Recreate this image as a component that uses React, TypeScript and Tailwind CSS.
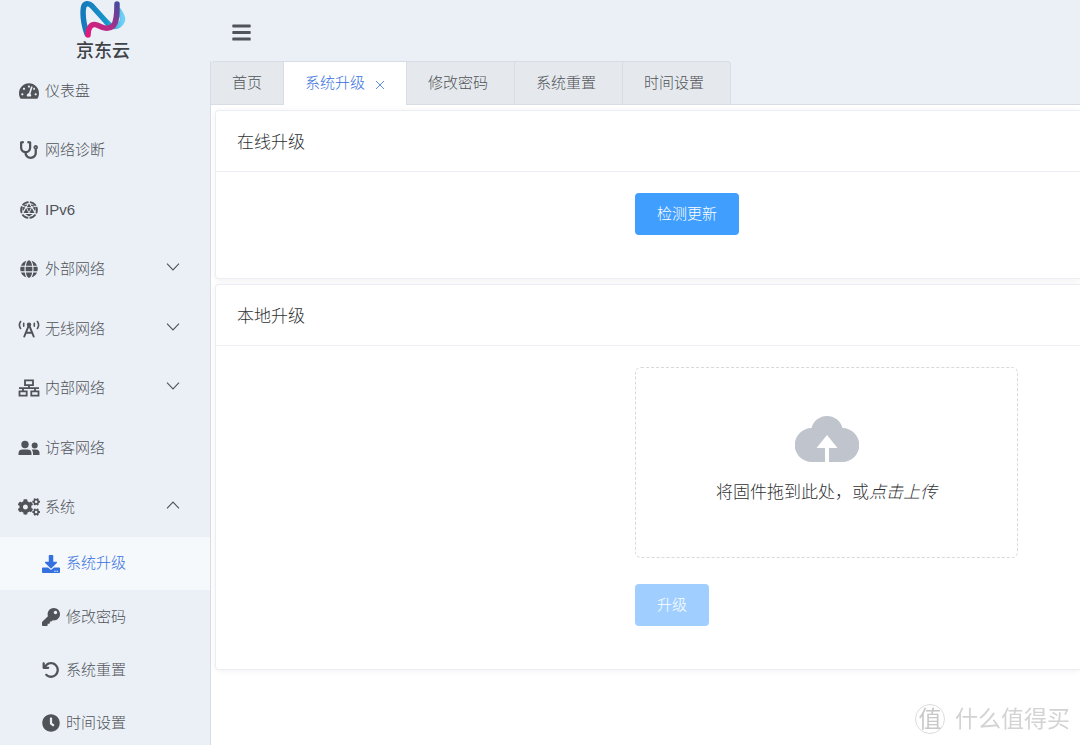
import { useState } from 'react';
import type { ReactNode } from 'react';
import { FaBars, FaClock, FaCogs, FaDownload, FaGlobe, FaKey, FaStethoscope, FaTachometerAlt } from 'react-icons/fa';
import { FaArrowRotateLeft } from 'react-icons/fa6';

type Item = { label: string; icon: ReactNode; expandable?: boolean };

function Polyhedron() {
  return (
    <svg viewBox="0 0 24 24" fill="none" stroke="currentColor" className="size-[18px]" aria-hidden="true">
      <circle cx="12" cy="12" r="10.6" strokeWidth="2.400" strokeDasharray="9.3 1.800" strokeDashoffset="4.6" />
      <path d="M12 3.200 9 8.200h6zM8.200 9.300 4.700 16h6.800zM15.800 9.300 12.500 16h6.800zM9.500 9.300h5L12 14.800zM3 7.500 7 8.800 3.600 14zM21 7.500 17 8.800l3.400 5.200zM7 17.400h10L12 20.600z" fill="currentColor" stroke="none" />
      <path d="M5.600 6.900 9 5.100M18.400 6.900 15 5.100" strokeWidth="2" />
    </svg>
  );
}

function Antenna() {
  return (
    <svg viewBox="0 0 22 18" fill="none" stroke="currentColor" strokeLinecap="round" strokeLinejoin="round" className="h-[18px] w-[22px]" aria-hidden="true">
      <path d="M2.600 1.500Q.2 5 2.600 8.500M19.400 1.500Q21.800 5 19.400 8.500M5.700 3.300V6.300M16.300 3.300V6.300" strokeWidth="1.6" />
      <path d="M6.300 16.500 11 4.800l4.700 11.700M8 12.700h6" strokeWidth="2" />
      <circle cx="11" cy="4.600" r="2.200" fill="currentColor" stroke="none" />
    </svg>
  );
}

function Topology() {
  return (
    <svg viewBox="0 0 22 18" fill="none" stroke="currentColor" strokeWidth="1.800" className="h-[18px] w-[22px]" aria-hidden="true">
      <path d="M7 1.400h8v4.700H7zM1.500 12.400h7.200v4.200H1.500zM13.300 12.400h7.200v4.200h-7.200zM11 6v3.200M5 12V9.200h12V12M1 9.200h20" />
    </svg>
  );
}

function People() {
  return (
    <svg viewBox="0 0 22 18" fill="currentColor" className="h-[18px] w-[22px]" aria-hidden="true">
      <circle cx="7" cy="5.500" r="3.700" />
      <circle cx="16.700" cy="6.500" r="3" />
      <path d="M.5 16v-1.500a4 4 0 0 1 4-4h5a4 4 0 0 1 4 4V16zM15 16v-2a6 6 0 0 0-1.300-3.500h4.300a3.500 3.500 0 0 1 3.500 3.500v2z" />
    </svg>
  );
}

const items: Item[] = [
  { label: '仪表盘', icon: <FaTachometerAlt className="h-[18px] w-5" /> },
  { label: '网络诊断', icon: <FaStethoscope className="size-[18px]" /> },
  { label: 'IPv6', icon: <Polyhedron /> },
  { label: '外部网络', icon: <FaGlobe className="size-[18px]" />, expandable: true },
  { label: '无线网络', icon: <Antenna />, expandable: true },
  { label: '内部网络', icon: <Topology />, expandable: true },
  { label: '访客网络', icon: <People /> },
];

const subItems: Item[] = [
  { label: '系统升级', icon: <FaDownload className="size-[18px]" /> },
  { label: '修改密码', icon: <FaKey className="size-[18px]" /> },
  { label: '系统重置', icon: <FaArrowRotateLeft className="size-[18px]" /> },
  { label: '时间设置', icon: <FaClock className="size-[18px]" /> },
];

const tabs = ['首页', '系统升级', '修改密码', '系统重置', '时间设置'];

function tabClass(tab: string, active: boolean) {
  if (active) return '-mb-px flex items-center border-l border-[#d8dce5] bg-white px-[21px] text-[#3570e0]';
  if (tab === '首页') return 'flex items-center px-[21px]';
  return 'flex items-center border-l border-[#d8dce5] pr-[26px] pl-[21px]';
}

function Logo() {
  return (
    <a href="#home" className="flex h-[61px] w-[206px] flex-col items-center text-[#3f4347]">
      <svg viewBox="0 0 48 40" className="h-10 w-12 shrink-0" fill="none" strokeLinecap="round" strokeLinejoin="round" aria-hidden="true">
        <defs>
          <linearGradient id="logoBlue" x1="0" y1="0" x2="1" y2="0">
            <stop offset="0" stopColor="#1679ba" />
            <stop offset="0.6" stopColor="#1796cb" />
            <stop offset="1" stopColor="#6fd0f5" />
          </linearGradient>
          <linearGradient id="logoPink" x1="0" y1="1" x2="1" y2="0">
            <stop offset="0" stopColor="#e5197d" />
            <stop offset="0.5" stopColor="#b02c86" />
            <stop offset="1" stopColor="#4a4a9c" />
          </linearGradient>
        </defs>
        <path d="M8 34C5 25 3.500 14 4.500 7.500C5.500 3 9.500 2.500 13 6L27 21.500C32 28 38 28 42 23C45 19 43 16 40 11" stroke="url(#logoBlue)" strokeWidth="5.5" />
        <path d="M9 35C9 28 12 23 18 25C24 28 29 30 34 26C38 22 38 14 38 4" stroke="url(#logoPink)" strokeWidth="5.5" />
      </svg>
      <span className="text-[18px] leading-[22px] font-medium">京东云</span>
    </a>
  );
}

function Chevron({ open }: { open?: boolean }) {
  return (
    <svg viewBox="0 0 14 12" className="mr-[30px] mb-1 ml-auto h-3 w-3.5" fill="none" stroke="currentColor" strokeWidth="1.1" aria-hidden="true">
      <path d={open ? 'M1 9.300 7 3l6 6.300' : 'M1 2.700 7 9l6-6.300'} />
    </svg>
  );
}

function Card({ title, children }: { title: string; children: ReactNode }) {
  return (
    <section className="rounded-l border border-r-0 border-[#ebeef5] bg-white shadow-[0_1px_6px_rgba(0,0,0,0.06)]">
      <h2 className="border-b border-[#ebeef5] px-[21px] pt-5 pb-[17px] text-[17px] leading-[23px] text-[#303133]">{title}</h2>
      <div className="pt-[21px] pb-[43px] pl-[419px]">{children}</div>
    </section>
  );
}

export default function App() {
  const [active, setActive] = useState('系统升级');
  return (
    <div className="flex min-h-screen overflow-hidden bg-[#ebf0f7] font-['Liberation_Sans','Noto_Sans_CJK_SC',sans-serif] text-[15px] font-light text-[#505357]">
      <aside className="w-[210px] shrink-0">
        <Logo />
        <nav aria-label="主菜单">
          <div className="grid h-[476px] auto-rows-fr">
            {items.map(({ label, icon, expandable }) => (
              <a key={label} href="#menu" className="flex items-center pl-[18px]">
                <span className="flex w-[22px] justify-center">{icon}</span>
                <span className="ml-[5px]">{label}</span>
                {expandable && <Chevron />}
              </a>
            ))}
            <button type="button" aria-expanded="true" className="flex items-center pl-[18px]">
              <span className="flex w-[22px] justify-center"><FaCogs className="h-[18px] w-[22px]" /></span>
              <span className="ml-[5px]">系统</span>
              <Chevron open />
            </button>
          </div>
          {subItems.map(({ label, icon }) => (
            <a
              key={label}
              href="#menu"
              className={label === '系统升级' ? 'flex h-[53px] items-center bg-[#f5f9fc] pl-[42px] text-[#3570e0]' : 'flex h-[53px] items-center pt-px pl-[42px]'}
            >
              {icon}
              <span className="ml-[6px]">{label}</span>
            </a>
          ))}
        </nav>
      </aside>

      <div className="flex min-w-0 flex-1 flex-col">
        <header className="flex h-[61px] items-center pt-[3px] pl-[21px]">
          <button type="button" aria-label="折叠菜单"><FaBars className="size-[21px]" /></button>
        </header>
        <main className="flex-1 border-l border-[#d8dce5] bg-white">
          <div className="flex border-b border-[#d8dce5] bg-[#ebf0f7]">
            <div role="tablist" className="-mb-px flex h-[44px] rounded-t border border-l-0 border-[#d8dce5] bg-[#e5e9ed]">
              {tabs.map((tab) => (
                <button
                  key={tab}
                  type="button"
                  role="tab"
                  aria-selected={tab === active}
                  onClick={() => setActive(tab)}
                  className={tabClass(tab, tab === active)}
                >
                  {tab}
                  {tab === active && (
                    <svg viewBox="0 0 10 10" className="mt-0.5 ml-[10px] size-[10px]" stroke="currentColor" strokeWidth="0.8" aria-hidden="true">
                      <path d="m1 1 8 8M9 1 1 9" />
                    </svg>
                  )}
                </button>
              ))}
            </div>
          </div>
          <div className="flex flex-col gap-[5px] pt-[5px] pl-1">
            <Card title="在线升级">
              <button type="button" className="block h-[42px] rounded bg-[#409eff] px-[22px] text-white">检测更新</button>
            </Card>
            <Card title="本地升级">
              <label className="flex h-[191px] w-[383px] flex-col items-center rounded-md border border-dashed border-[#d9d9d9] pt-[46px] text-[17px] text-[#303133]">
                <input type="file" className="sr-only" />
                <svg viewBox="0 0 64 48" className="h-12 w-16" fill="#c0c4cc" aria-hidden="true">
                  <path d="M16.500 14A16 16 0 0 1 47.500 14A17 17 0 0 1 47 48H34V34H42.500L32 21 21.500 34H30V48H17A17 17 0 0 1 16.500 14Z" />
                </svg>
                <span className="mt-[18px] leading-[26px]">将固件拖到此处，或<em>点击上传</em></span>
              </label>
              <button type="button" disabled className="mt-[26px] block h-[42px] rounded bg-[#a0cfff] px-[22px] text-white">升级</button>
            </Card>
          </div>
        </main>
      </div>

      <div className="fixed right-[10px] bottom-[9px] flex items-center gap-[10px] font-normal text-[#d3d3d3]">
        <span className="flex size-[30px] items-center justify-center rounded-full border border-[#dcdcdc] text-[23px] leading-none text-[#c8c8c8]">值</span>
        <span className="text-[23px] leading-[34px]">什么值得买</span>
      </div>
    </div>
  );
}
